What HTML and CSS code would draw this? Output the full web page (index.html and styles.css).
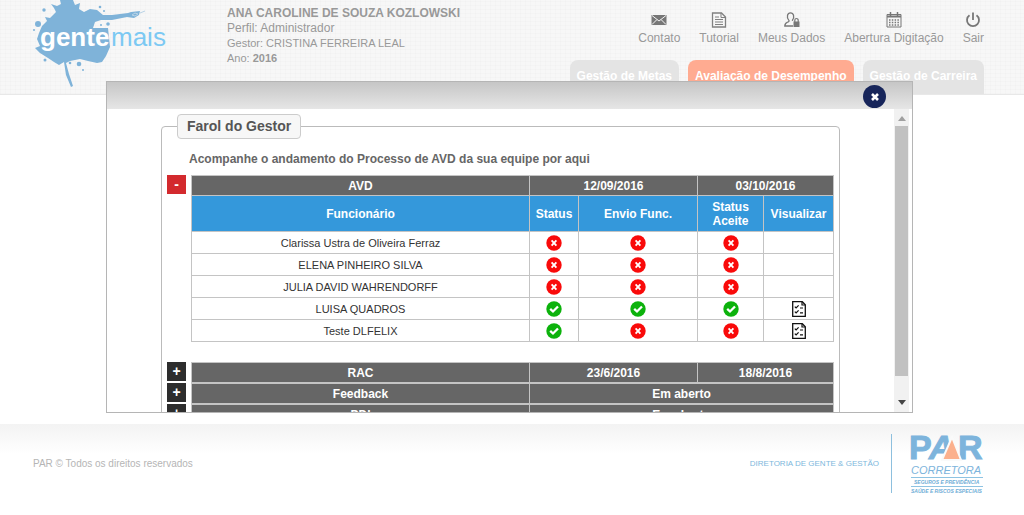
FILE: index.html
```html
<!DOCTYPE html>
<html lang="pt-BR">
<head>
<meta charset="utf-8">
<title>Gente Mais - Farol do Gestor</title>
<link rel="stylesheet" href="styles.css">
</head>
<body>
<svg class="sprite" aria-hidden="true">
  <symbol id="no" viewBox="0 0 16 16"><circle cx="8" cy="8" r="7.7" fill="#f90a0a"/><path d="M5.600 5.300l4.800 5.400M10.400 5.300l-4.800 5.400" stroke="#fff" stroke-width="1.800"/></symbol>
  <symbol id="yes" viewBox="0 0 16 16"><circle cx="8" cy="8" r="7.7" fill="#0cb20c"/><path d="M4.200 7.800l2.800 2.700 5-5" fill="none" stroke="#fff" stroke-width="2.300"/></symbol>
  <symbol id="doc" viewBox="0 0 14 16"><path d="M.7.7h9.600l3 3v11.600H.7z" fill="#fff" stroke="#111" stroke-width="1.300"/><path d="M10 1v3h3M2.800 5.600l1.300 1.300 2.500-2.600M2.800 10.600l1.300 1.300 2.500-2.600M8 7h3M8 11.800h3" fill="none" stroke="#111" stroke-width="1.200"/></symbol>
</svg>

<header class="top">
  <svg class="brand" width="180" height="90" viewBox="0 0 180 90" role="img" aria-label="gentemais">
    <path fill="#7fb3d9" d="M50 18L56 12 54 8 51 4 57 6 61 4 60 0H73L75 5 80 3 79 9 84 12 90 9 97 10 103 15 112 15 128 13 131 12 140 11 139 15 134 18 127 17 112 20 101 20 95 22 93 28H108L110 47 106 56 102 62 97 63 88 61 80 59 70 61 66 63 69 74 73 86 71 87 66 75 64 62 59 65 54 62 48 58 40 53 35 48 40 46 37 39 39 33 42 26 47 21 45 17z"/>
    <path d="M132 15l3-2 3 1-3 2zM140 13l5-2" fill="none" stroke="#b9d3e6"/>
    <g fill="#7fb3d9"><circle cx="38" cy="24" r="3"/><circle cx="44" cy="10" r="1.700"/><circle cx="100" cy="7" r="1.300"/><circle cx="104" cy="11" r="1"/><circle cx="108" cy="24" r="1.800"/><circle cx="101" cy="25" r="1"/><circle cx="79" cy="64" r="2.300"/><circle cx="70" cy="63" r="1.300"/><circle cx="83" cy="70" r="1"/><circle cx="45" cy="60" r="1.500"/><circle cx="34" cy="30" r="1"/></g>
    <text x="40" y="46" class="brand-a">gente</text>
    <text x="111" y="46" class="brand-b">mais</text>
  </svg>
  <div class="user">
    <strong class="user-name">ANA CAROLINE DE SOUZA KOZLOWSKI</strong>
    <span class="user-role">Perfil: Administrador</span>
    <span>Gestor: CRISTINA FERREIRA LEAL</span>
    <span>Ano: <b>2016</b></span>
  </div>
  <div class="menus">
    <nav class="links">
      <a href="#"><svg width="16" height="16" viewBox="0 0 16 16"><path d="M.5 3h15v10H.5z" fill="#777"/><path d="M1 3.500l7 5.500 7-5.500M1 12.500l5-5M15 12.500l-5-5" fill="none" stroke="#f4f4f4"/></svg>Contato</a>
      <a href="#"><svg width="16" height="16" viewBox="0 0 16 16" fill="none" stroke="#808080"><path d="M1.500 1h9l4 4v10h-13z" stroke-width="1.300"/><path d="M10 1v4.500h4M4 5h4M4 7.500h8M4 10h8M4 12.500h8"/></svg>Tutorial</a>
      <a href="#"><svg width="16" height="16" viewBox="0 0 16 16"><path d="M9 14H.8c0-3 1.700-3.400 3.500-4.200 1-.5.900-1.300.3-2C2.500 5 3.200.8 6.500.8S10.600 5 8.600 7.800l-.2 1" fill="none" stroke="#777" stroke-width="1.300"/><path d="M9.500 9.500h6V15h-6z" fill="#777"/><path d="M10.800 10V8.200a1.700 1.700 0 013.400 0V10" fill="none" stroke="#777" stroke-width="1.200"/></svg>Meus Dados</a>
      <a href="#"><svg width="16" height="16" viewBox="0 0 16 16" fill="none" stroke="#777"><path d="M1 2.500h14v12.500H1z"/><path d="M1 4.500h14" stroke-width="2"/><path d="M4.500 0v4M11.500 0v4" stroke-width="1.500"/><path d="M3 8h11M3 10.500h11M3 13h11" stroke-width="1.500" stroke-dasharray="1.500 1.300"/></svg>Abertura Digitação</a>
      <a href="#"><svg width="16" height="16" viewBox="0 0 16 16" fill="none" stroke="#777" stroke-width="1.800"><path d="M4.500 3.300a6 6 0 107 0M8 .5v7.500"/></svg>Sair</a>
    </nav>
    <nav class="tabs">
      <a href="#">Gestão de Metas</a>
      <a href="#" class="active">Avaliação de Desempenho</a>
      <a href="#">Gestão de Carreira</a>
    </nav>
  </div>
</header>

<main class="page"></main>

<footer class="foot">
  <p class="copy">PAR © Todos os direitos reservados</p>
  <p class="dept">DIRETORIA DE GENTE &amp; GESTÃO</p>
  <svg class="par" width="74" height="60" viewBox="0 0 74 60" role="img" aria-label="PAR Corretora">
    <text class="par-a" x="-1" y="25">P</text>
    <text class="par-a slant" x="19" y="25">A</text>
    <text class="par-a" x="48" y="25">R</text>
    <path d="M42 3l9 23H32z" fill="#fbb08d" stroke="#fafafa" stroke-width="2"/>
    <text class="par-b" x="1" y="40">CORRETORA</text>
    <path d="M1 43.500h72M1 52.500h72" stroke="#8ec3e2"/>
    <text class="par-c" x="4" y="50">SEGUROS E PREVIDÊNCIA</text>
    <text class="par-c" x="1" y="59">SAÚDE E RISCOS ESPECIAIS</text>
  </svg>
</footer>

<section class="modal" role="dialog" aria-label="Farol do Gestor">
  <div class="modal-bar">
    <button class="close" aria-label="Fechar"><svg width="10" height="10" viewBox="0 0 10 10"><path d="M2 2l6 6M8 2L2 8" stroke="#fff" stroke-width="2.600"/></svg></button>
  </div>
  <div class="modal-main">
    <div class="view">
      <fieldset class="panel">
        <legend>Farol do Gestor</legend>
        <p class="intro">Acompanhe o andamento do Processo de AVD da sua equipe por aqui</p>
        <div class="group open">
          <button class="toggle minus">-</button>
          <table>
            <colgroup><col><col class="c2"><col class="c3"><col class="c4"><col class="c5"></colgroup>
            <thead>
              <tr class="dark"><th>AVD</th><th colspan="2">12/09/2016</th><th colspan="2">03/10/2016</th></tr>
              <tr class="blue"><th>Funcionário</th><th>Status</th><th>Envio Func.</th><th>Status Aceite</th><th>Visualizar</th></tr>
            </thead>
            <tbody>
              <tr><td>Clarissa Ustra de Oliveira Ferraz</td><td><svg class="st"><use href="#no"/></svg></td><td><svg class="st"><use href="#no"/></svg></td><td><svg class="st"><use href="#no"/></svg></td><td></td></tr>
              <tr><td>ELENA PINHEIRO SILVA</td><td><svg class="st"><use href="#no"/></svg></td><td><svg class="st"><use href="#no"/></svg></td><td><svg class="st"><use href="#no"/></svg></td><td></td></tr>
              <tr><td>JULIA DAVID WAHRENDORFF</td><td><svg class="st"><use href="#no"/></svg></td><td><svg class="st"><use href="#no"/></svg></td><td><svg class="st"><use href="#no"/></svg></td><td></td></tr>
              <tr><td>LUISA QUADROS</td><td><svg class="st"><use href="#yes"/></svg></td><td><svg class="st"><use href="#yes"/></svg></td><td><svg class="st"><use href="#yes"/></svg></td><td><a href="#" aria-label="Visualizar"><svg class="st"><use href="#doc"/></svg></a></td></tr>
              <tr><td>Teste DLFELIX</td><td><svg class="st"><use href="#yes"/></svg></td><td><svg class="st"><use href="#no"/></svg></td><td><svg class="st"><use href="#no"/></svg></td><td><a href="#" aria-label="Visualizar"><svg class="st"><use href="#doc"/></svg></a></td></tr>
            </tbody>
          </table>
        </div>
        <div class="group">
          <button class="toggle">+</button>
          <table>
            <colgroup><col><col class="c2"><col class="c3"><col class="c4"><col class="c5"></colgroup>
            <tr class="dark"><th>RAC</th><th colspan="2">23/6/2016</th><th colspan="2">18/8/2016</th></tr>
          </table>
        </div>
        <div class="group">
          <button class="toggle">+</button>
          <table>
            <colgroup><col><col class="c2"><col class="c3"><col class="c4"><col class="c5"></colgroup>
            <tr class="dark"><th>Feedback</th><th colspan="4">Em aberto</th></tr>
          </table>
        </div>
        <div class="group">
          <button class="toggle">+</button>
          <table>
            <colgroup><col><col class="c2"><col class="c3"><col class="c4"><col class="c5"></colgroup>
            <tr class="dark"><th>PDI</th><th colspan="4">Em aberto</th></tr>
          </table>
        </div>
      </fieldset>
    </div>
    <div class="scroll" aria-hidden="true">
      <svg width="8" height="5" viewBox="0 0 8 5"><path d="M0 5l4-5 4 5z" fill="#a0a0a0"/></svg>
      <div class="thumb"></div>
      <svg width="8" height="5" viewBox="0 0 8 5"><path d="M0 0l4 5 4-5z" fill="#444"/></svg>
    </div>
  </div>
</section>
</body>
</html>
```
FILE: styles.css
```css
* { box-sizing: border-box; }
body {
  margin: 0;
  min-height: 100vh;
  display: flex;
  flex-direction: column;
  position: relative;
  overflow: hidden;
  background: #fff;
  font: 12px/14px "Liberation Sans", Arial, sans-serif;
  color: #999;
}
p { margin: 0; }
a { color: inherit; text-decoration: none; }
.sprite { position: absolute; width: 0; height: 0; }

.top {
  display: flex;
  height: 95px;
  border-bottom: 1px solid #e8e8e8;
  background:
    repeating-linear-gradient(0deg, rgba(0, 0, 0, .012) 0 1px, transparent 1px 4px),
    repeating-linear-gradient(90deg, rgba(0, 0, 0, .012) 0 1px, transparent 1px 5px),
    #f7f7f7;
}
.brand { flex: none; }
.brand-a { font-size: 26px; font-weight: bold; fill: #fff; }
.brand-b { font-size: 26px; fill: #7cc9f3; }
.user {
  display: flex;
  flex-direction: column;
  margin-left: 47px;
  padding-top: 6px;
  font-size: 11px;
  line-height: 15px;
}
.user-name, .user-role { font-size: 12px; }
.menus {
  flex: 1;
  display: flex;
  flex-direction: column;
  justify-content: space-between;
  align-items: flex-end;
  padding: 12px 40px 0 0;
}
.links { display: flex; gap: 19px; }
.links a { display: flex; flex-direction: column; align-items: center; gap: 3px; }
.tabs { display: flex; gap: 9px; }
.tabs a {
  height: 34px;
  padding: 9px 7px 0;
  border-radius: 8px 8px 0 0;
  background: #e4e4e4;
  color: #fff;
  font-weight: bold;
}
.tabs .active { background: #ffab91; }

.page { flex: 1; }

.foot {
  display: flex;
  align-items: flex-start;
  height: 91px;
  padding: 10px 40px 0 33px;
  background: linear-gradient(#f3f3f3, #fff 30px);
}
.copy { flex: 1; padding-top: 23px; font-size: 10px; color: #b5b5b5; }
.dept {
  height: 59px;
  padding: 23px 12px 0 0;
  border-right: 1px solid #8ec0de;
  font-size: 8px;
  color: #7db7dc;
}
.par { margin-left: 18px; overflow: visible; }
.par-a { font-size: 34px; font-weight: bold; fill: #7db4dc; stroke: #7db4dc; stroke-width: 1px; }
.slant { font-style: italic; }
.par-b { font-size: 11px; font-style: italic; fill: #7db4dc; }
.par-c { font-size: 5px; font-style: italic; font-weight: bold; fill: #6fadd6; }

.modal {
  position: absolute;
  top: 81px;
  left: 106px;
  right: 111px;
  border: 1px solid #b5b5b5;
  background: #fff;
}
.modal-bar {
  display: flex;
  justify-content: flex-end;
  align-items: center;
  height: 27px;
  padding: 2px 26px 0 0;
  background: linear-gradient(#c6c6c6, #e6e6e6);
}
.close {
  display: flex;
  align-items: center;
  justify-content: center;
  width: 23px;
  height: 23px;
  padding: 0;
  border: 0;
  border-radius: 50%;
  background: #17255a;
}
.modal-main { display: flex; height: 303px; }
.view { flex: 1; overflow: hidden; padding: 5px 54px 0; }
.scroll {
  display: flex;
  flex-direction: column;
  align-items: center;
  gap: 5px;
  width: 15px;
  margin-right: 3px;
  padding: 7px 0;
  background: #f1f1f1;
}
.thumb { width: 13px; height: 250px; margin-bottom: auto; background: #c1c1c1; }

.panel {
  margin: 0;
  padding: 13px 5px 20px;
  border: 1px solid #bbb;
  border-radius: 4px;
}
.panel legend {
  margin-left: 10px;
  padding: 3px 9px;
  border: 1px solid #ccc;
  border-radius: 4px;
  background: #f7f7f7;
  color: #555;
  font-size: 14px;
  font-weight: bold;
  line-height: 17px;
}
.intro { margin: 0 0 9px 22px; color: #666; font-weight: bold; }
.group { display: flex; align-items: flex-start; gap: 5px; }
.group.open { margin-bottom: 20px; }
.toggle {
  width: 19px;
  height: 19px;
  flex: none;
  padding: 0;
  border: 0;
  background: #2d2d2d;
  color: #fff;
  font: bold 14px/19px "Liberation Sans", Arial, sans-serif;
}
.minus { background: #d32a2e; }
table { flex: 1; table-layout: fixed; width: 100%; border-collapse: collapse; color: #333; }
.c2 { width: 49px; }
.c3 { width: 119px; }
.c4 { width: 66px; }
.c5 { width: 70px; }
th, td { padding: 0; border: 1px solid #c4c4c4; text-align: center; }
td { height: 22px; font-size: 11px; }
.dark th { height: 20px; background: #666; color: #fff; }
.blue th { height: 36px; padding: 0 10px; background: #3498db; color: #fff; }
.blue th:nth-child(2), .blue th:nth-child(5) { padding: 0; }
.st { display: block; width: 16px; height: 16px; margin: 0 auto; }
```
